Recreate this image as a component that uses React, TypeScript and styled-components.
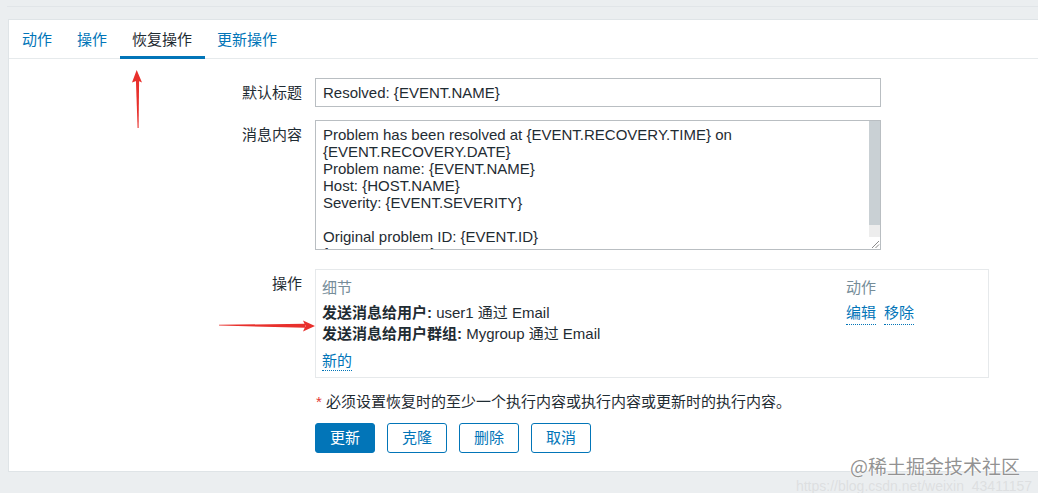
import React from "react";
import styled, { createGlobalStyle } from "styled-components";

const Global = createGlobalStyle`
  html, body {
    margin: 0;
    padding: 0;
    background: #ebeef0;
    overflow: hidden;
  }
  body {
    font-family: "Liberation Sans", Arial, "Noto Sans CJK SC", sans-serif;
    font-size: 15px;
    color: #1f2c33;
  }
  * { box-sizing: border-box; }
`;

const Page = styled.div`
  position: relative;
  width: 1038px;
  height: 493px;
  overflow: hidden;
`;

const TopStrip = styled.div`
  height: 7px;
  margin-left: 7px;
  border-bottom: 1px solid #e1e5e8;
`;

const Panel = styled.div`
  margin: 12px -20px 0 8px;
  background: #ffffff;
  border: 1px solid #dfe4e7;
  border-right: none;
  padding-bottom: 18px;
`;

const TabBar = styled.div`
  display: flex;
  height: 39px;
  padding-left: 0.5px;
  border-bottom: 1px solid #e6eaec;
`;

const Tab = styled.div<{ $active?: boolean }>`
  display: flex;
  align-items: center;
  height: 39px;
  margin-bottom: -1px;
  padding: 3px 12.5px 0;
  border-bottom: 3px solid ${(p) => (p.$active ? "#0275b8" : "transparent")};
  color: ${(p) => (p.$active ? "#1f2c33" : "#0275b8")};
  line-height: 17px;
  white-space: nowrap;
`;

const Form = styled.div`
  padding-top: 19px;
`;

const Row = styled.div<{ $mb?: number }>`
  display: flex;
  align-items: flex-start;
  margin-bottom: ${(p) => p.$mb ?? 0}px;
`;

const Label = styled.div`
  width: 293px;
  flex: none;
  padding-top: 6px;
  text-align: right;
  line-height: 17px;
  margin-right: 13px;
`;

const Field = styled.div`
  flex: 1;
  min-width: 0;
`;

const TextInput = styled.input`
  display: block;
  width: 566px;
  height: 29px;
  margin: 0;
  padding: 0 7px;
  border: 1px solid #b9bec2;
  background: #fff;
  font: inherit;
  color: #1f2c33;
  outline: none;
`;

const TextAreaBox = styled.div`
  display: flex;
  width: 566px;
  height: 130px;
  border: 1px solid #b9bec2;
  background: #fff;
`;

const TextArea = styled.textarea`
  flex: 1;
  min-width: 0;
  height: 100%;
  margin: 0;
  padding: 5px 7px;
  border: none;
  background: transparent;
  font: inherit;
  line-height: 17px;
  color: #1f2c33;
  resize: none;
  outline: none;
  overflow: hidden;
`;

const ScrollTrack = styled.div`
  width: 11px;
  flex: none;
  display: flex;
  flex-direction: column;
  background: #ededed;
`;

const ScrollThumb = styled.div`
  height: 104px;
  background: #c9d0d4;
`;

const ResizeGrip = styled.svg`
  margin-top: auto;
  display: block;
  background: #ffffff;
`;

const OpsBox = styled.div`
  width: 674px;
  border: 1px solid #e6e9eb;
  padding: 8.5px 6px 8px;
`;

const OpsGrid = styled.div`
  display: grid;
  grid-template-columns: 524px 1fr;
  row-gap: 8px;
  line-height: 17px;
`;

const HeadCell = styled.div`
  color: #768d99;
`;

const DetailCell = styled.div`
  line-height: 21px;
  margin-top: -2px;
`;

const ActionCell = styled.div`
  display: flex;
  gap: 8px;
  line-height: 21px;
  margin-top: -2px;
  align-items: flex-start;
`;

const Strong = styled.b`
  font-weight: bold;
`;

const Link = styled.a`
  color: #0275b8;
  text-decoration: none;
  border-bottom: 1px dotted #0275b8;
  padding-bottom: 1px;
  cursor: pointer;
`;

const NewLine = styled.div`
  margin-top: 8px;
  line-height: 17px;
`;

const Note = styled.div`
  line-height: 17px;
`;

const Asterisk = styled.span`
  color: #e33734;
  margin-left: 1px;
`;

const Buttons = styled.div`
  display: flex;
  gap: 12px;
`;

const Button = styled.button<{ $primary?: boolean }>`
  width: 60px;
  height: 30px;
  margin: 0;
  padding: 0;
  border: 1px solid #0275b8;
  border-radius: 3px;
  background: ${(p) => (p.$primary ? "#0275b8" : "#ffffff")};
  color: ${(p) => (p.$primary ? "#ffffff" : "#0275b8")};
  font: inherit;
  line-height: 28px;
  cursor: pointer;
`;

const Overlay = styled.svg`
  position: absolute;
  left: 0;
  top: 0;
  pointer-events: none;
`;

const Watermark = styled.div`
  position: absolute;
  right: 18px;
  top: 456px;
  font-family: "Noto Sans CJK SC", sans-serif;
  font-size: 19px;
  line-height: 19px;
  color: rgba(110, 110, 110, 0.75);
  text-shadow: 0 0 2px #fff, 0 0 1px #fff;
  pointer-events: none;
  white-space: nowrap;
`;

const CsdnMark = styled.div`
  position: absolute;
  right: 6px;
  top: 479px;
  font-family: "Liberation Sans", sans-serif;
  font-size: 14px;
  line-height: 14px;
  color: rgba(200, 200, 200, 0.4);
  pointer-events: none;
  white-space: nowrap;
`;

const message = `Problem has been resolved at {EVENT.RECOVERY.TIME} on {EVENT.RECOVERY.DATE}
Problem name: {EVENT.NAME}
Host: {HOST.NAME}
Severity: {EVENT.SEVERITY}

Original problem ID: {EVENT.ID}
{TRIGGER.URL}`;

export default function App() {
  return (
    <Page>
      <Global />
      <TopStrip />
      <Panel>
        <TabBar>
          <Tab>动作</Tab>
          <Tab>操作</Tab>
          <Tab $active>恢复操作</Tab>
          <Tab>更新操作</Tab>
        </TabBar>
        <Form>
          <Row $mb={13}>
            <Label>默认标题</Label>
            <Field>
              <TextInput readOnly value="Resolved: {EVENT.NAME}" />
            </Field>
          </Row>
          <Row $mb={19}>
            <Label>消息内容</Label>
            <Field>
              <TextAreaBox>
                <TextArea readOnly value={message} />
                <ScrollTrack>
                  <ScrollThumb />
                  <ResizeGrip width="11" height="12" viewBox="0 0 11 12">
                    <path d="M3 11 L10 4 M6.5 11 L10 7.5" stroke="#8a8a8a" strokeWidth="1" />
                  </ResizeGrip>
                </ScrollTrack>
              </TextAreaBox>
            </Field>
          </Row>
          <Row $mb={15}>
            <Label>操作</Label>
            <Field>
              <OpsBox>
                <OpsGrid>
                  <HeadCell>细节</HeadCell>
                  <HeadCell>动作</HeadCell>
                  <DetailCell>
                    <div>
                      <Strong>发送消息给用户:</Strong> user1 通过 Email
                    </div>
                    <div>
                      <Strong>发送消息给用户群组:</Strong> Mygroup 通过 Email
                    </div>
                  </DetailCell>
                  <ActionCell>
                    <Link>编辑</Link>
                    <Link>移除</Link>
                  </ActionCell>
                </OpsGrid>
                <NewLine>
                  <Link>新的</Link>
                </NewLine>
              </OpsBox>
            </Field>
          </Row>
          <Row $mb={13}>
            <Label />
            <Field>
              <Note>
                <Asterisk>*</Asterisk> 必须设置恢复时的至少一个执行内容或执行内容或更新时的执行内容。
              </Note>
            </Field>
          </Row>
          <Row>
            <Label />
            <Field>
              <Buttons>
                <Button $primary>更新</Button>
                <Button>克隆</Button>
                <Button>删除</Button>
                <Button>取消</Button>
              </Buttons>
            </Field>
          </Row>
        </Form>
      </Panel>

      <Overlay width="1038" height="493" viewBox="0 0 1038 493">
        <polygon points="138.6,128 137.6,128 135.9,80 139.1,80" fill="#e8302c" />
        <polygon points="136.7,70 142,82.5 137.5,80.5 132,82.5" fill="#e8302c" />
        <polygon points="219,324.8 219,325.6 305,327.8 305,323.8" fill="#e8302c" />
        <polygon points="315,326 303,331.5 305.5,326 303,320.5" fill="#e8302c" />
      </Overlay>
      <CsdnMark>https://blog.csdn.net/weixin_43411157</CsdnMark>
      <Watermark>@稀土掘金技术社区</Watermark>
    </Page>
  );
}
